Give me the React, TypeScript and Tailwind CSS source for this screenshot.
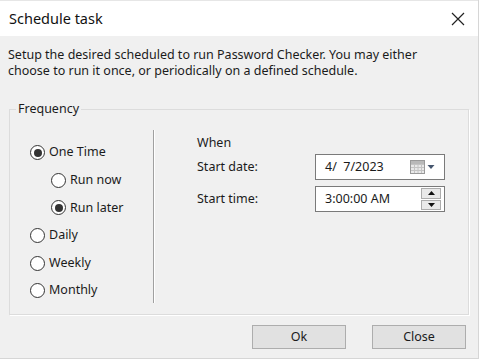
import React from "react";

const font = { fontFamily: '"Segoe UI", "Noto Sans", "Open Sans", sans-serif' };

function Radio({ label, checked }: { label: string; checked?: boolean }) {
  return (
    <label className="flex h-[27.6px] items-center gap-[4px]">
      <span className="flex size-[15px] items-center justify-center rounded-full border border-[#333] bg-white">
        {checked && <span className="size-[8px] rounded-full bg-[#333]" />}
      </span>
      <span>{label}</span>
    </label>
  );
}

function CalendarIcon() {
  return (
    <svg width="26" height="16" viewBox="0 0 26 16">
      <rect x="0.5" y="1.5" width="14" height="13" fill="#e9e9e9" stroke="#9a9a9a" />
      <path d="M1 5.5H14M1 8.5H14M1 11.5H14M4.5 5V14M8 5V14M11.5 5V14" stroke="#c4c4c4" />
      <rect x="1" y="2" width="13" height="3" fill="#b9b9b9" />
      <path d="M17.5 6H24.5L21 10Z" fill="#46566e" />
    </svg>
  );
}

function Spinner() {
  return (
    <div className="flex h-[22px] w-[20px] flex-col gap-[1px]">
      <div className="flex flex-1 items-center justify-center border border-[#acacac] bg-[#e9e9e9]">
        <svg width="7" height="4" viewBox="0 0 7 4">
          <path d="M0 4H7L3.5 0Z" fill="#111" />
        </svg>
      </div>
      <div className="flex flex-1 items-center justify-center border border-[#acacac] bg-[#e9e9e9]">
        <svg width="7" height="4" viewBox="0 0 7 4">
          <path d="M0 0H7L3.5 4Z" fill="#111" />
        </svg>
      </div>
    </div>
  );
}

export default function App() {
  return (
    <div
      className="flex h-[359px] w-[479px] flex-col border-b border-r border-[#d6d6d6] bg-[#f0f0f0] text-[12.5px] text-[#1b1b1b]"
      style={font}
    >
      <div className="flex h-[36px] items-center justify-between border-t border-[#e6e6e6] bg-white pl-[9px] pr-[13px]">
        <span className="text-[14.5px] text-[#111]">Schedule task</span>
        <svg width="14" height="14" viewBox="0 0 14 14">
          <path d="M1 1L13 13M13 1L1 13" stroke="#222" strokeWidth="1.2" />
        </svg>
      </div>

      <p className="px-[8px] pt-[11px] leading-[16px]">
        Setup the desired scheduled to run Password Checker. You may either
        <br />
        choose to run it once, or periodically on a defined schedule.
      </p>

      <fieldset className="mx-[9px] mt-[22px] h-[214px] border border-[#dcdcdc] shadow-[1px_1px_0_#fff]">
        <legend className="ml-[6px] px-[2px] leading-[16px]">Frequency</legend>
        <div className="flex">
          <div className="w-[143px] pl-[20px] pt-[22px]">
            <Radio label="One Time" checked />
            <div className="pl-[21px]">
              <Radio label="Run now" />
              <Radio label="Run later" checked />
            </div>
            <Radio label="Daily" />
            <Radio label="Weekly" />
            <Radio label="Monthly" />
          </div>
          <div className="mt-[13px] h-[173px] w-[2px] border-l border-[#a0a0a0] bg-white" />
          <div className="flex flex-col pl-[42px] pt-[16px]">
            <div className="flex h-[20px] items-center">When</div>
            <div className="mt-[1px] flex items-center">
              <span className="w-[118px]">Start date:</span>
              <div className="flex h-[26px] w-[130px] items-center justify-between border border-[#7a7a7a] bg-white pl-[9px] pr-[8px]">
                <span>4/&nbsp;&nbsp;7/2023</span>
                <CalendarIcon />
              </div>
            </div>
            <div className="mt-[6px] flex items-center">
              <span className="w-[118px]">Start time:</span>
              <div className="flex h-[26px] w-[130px] items-center justify-between border border-[#7a7a7a] bg-white pl-[9px] pr-[3px]">
                <span>3:00:00 AM</span>
                <Spinner />
              </div>
            </div>
          </div>
        </div>
      </fieldset>

      <div className="mt-auto mb-[9px] flex justify-end gap-[26px] pr-[12px]">
        <button className="h-[24px] w-[94px] border border-[#adadad] bg-[#e1e1e1]">Ok</button>
        <button className="h-[24px] w-[94px] border border-[#adadad] bg-[#e1e1e1]">Close</button>
      </div>
    </div>
  );
}
